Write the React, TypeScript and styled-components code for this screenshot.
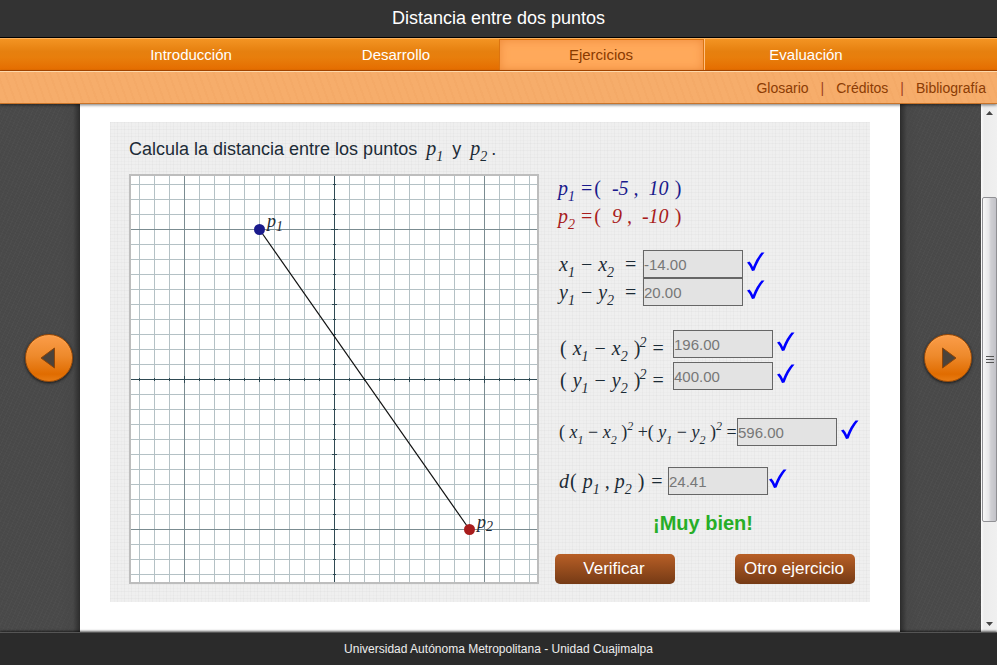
import React from "react";
import styled, { createGlobalStyle, css } from "styled-components";

const GlobalStyle = createGlobalStyle`
  *, *::before, *::after { box-sizing: border-box; }
  body {
    margin: 0;
    background: #484848;
    font-family: "Liberation Sans", Arial, sans-serif;
    color: #1c2b36;
  }
`;

const Page = styled.div`
  display: flex;
  flex-direction: column;
  min-height: 100vh;
`;

const Header = styled.header`
  display: flex;
  align-items: center;
  justify-content: center;
  height: 38px;
  padding-bottom: 2px;
  background: #333;
  border-bottom: 1px solid #000;
`;

const PageTitle = styled.h1`
  margin: 0;
  font-size: 18px;
  line-height: 24px;
  font-weight: normal;
  color: #fff;
`;

const Nav = styled.nav`
  display: flex;
  justify-content: center;
  height: 33px;
  border-top: 1px solid #fbb15c;
  border-bottom: 1px solid #b04a00;
  background: linear-gradient(#f39423, #e6800f 40%, #e87e0c 60%, #e56d00);
`;

const Tab = styled.a<{ $active?: boolean }>`
  flex: 0 1 205px;
  display: flex;
  align-items: center;
  justify-content: center;
  font-size: 15px;
  line-height: 20px;
  color: #fff;
  text-decoration: none;
  ${(p) =>
    p.$active &&
    css`
      color: #8a3a00;
      background: #ffa95b;
      border: 1px solid #dc7410;
      border-bottom: 0;
      box-shadow: inset 0 0 10px #ef8c3c, 1px 0 0 #ffc183;
    `}
`;

const LinkBar = styled.nav`
  position: relative;
  display: flex;
  align-items: center;
  justify-content: flex-end;
  gap: 12px;
  height: 33px;
  padding: 1px 11px 0;
  font-size: 14px;
  line-height: 20px;
  color: #a04020;
  background:
    repeating-linear-gradient(70deg, rgba(220, 130, 60, 0.07) 0 2px, transparent 2px 7px),
    #f6ad6b;
  border-top: 1px solid #ffd9ab;
  border-bottom: 1px solid #c8742a;
  box-shadow: 0 1px 3px rgba(0, 0, 0, 0.55);
`;

const BarLink = styled.a`
  color: #8c3c04;
  text-decoration: none;
`;

const Main = styled.main`
  flex: 1;
  display: flex;
`;

const Side = styled.div<{ $right?: boolean }>`
  flex: 1 0 ${(p) => (p.$right ? 81 : 80)}px;
  display: flex;
  align-items: center;
  justify-content: flex-end;
  padding: 0 ${(p) => (p.$right ? 9 : 7)}px 20px 0;
  background:
    linear-gradient(
      ${(p) => (p.$right ? "to right" : "to left")},
      #2c2c2c,
      rgba(70, 70, 70, 0.6) 7px,
      rgba(72, 72, 72, 0) 20px
    ),
    repeating-linear-gradient(25deg, rgba(0, 0, 0, 0.03) 0 1px, transparent 1px 3px),
    repeating-linear-gradient(115deg, rgba(255, 255, 255, 0.02) 0 1px, transparent 1px 4px),
    #4a4a4a;
`;

const RoundButton = styled.button`
  flex: none;
  display: flex;
  align-items: center;
  justify-content: center;
  width: 48px;
  height: 48px;
  padding: 0;
  border: 1px solid #9c4a05;
  border-radius: 50%;
  background: linear-gradient(#fb9d4a, #ee8a2c 45%, #e06c00 85%, #e87c14);
  box-shadow: 0 1px 3px rgba(0, 0, 0, 0.7), inset 0 1px 1px #ffa550;
`;

const Content = styled.div`
  flex: 0 1 820px;
  min-width: 0;
  padding: 18px 30px 30px;
  background: #fff;
`;

const Exercise = styled.section`
  padding: 0 15px 18px 19px;
  background:
    repeating-linear-gradient(90deg, rgba(0, 0, 0, 0.022) 0 1px, transparent 1px 4px, rgba(0, 0, 0, 0.012) 4px 5px, transparent 5px 7px),
    repeating-linear-gradient(rgba(0, 0, 0, 0.022) 0 1px, transparent 1px 4px, rgba(0, 0, 0, 0.012) 4px 5px, transparent 5px 7px),
    #efefef;
`;

const Math = styled.span<{ $small?: boolean; $color?: string }>`
  font-family: "Liberation Serif", "Times New Roman", serif;
  font-size: ${(p) => (p.$small ? 18 : 20)}px;
  line-height: 28px;
  font-style: italic;
  white-space: pre;
  color: ${(p) => p.$color || "inherit"};

  b {
    margin: 0 ${(p) => (p.$small ? 0 : 1)}px;
    font-style: normal;
    font-weight: normal;
  }
  sub,
  sup {
    font-size: ${(p) => (p.$small ? 12 : 14)}px;
    line-height: 0;
    vertical-align: -6px;
  }
  sup {
    margin-left: ${(p) => (p.$small ? 0 : -2)}px;
    vertical-align: 8px;
  }
`;

const Question = styled.h2`
  height: 52px;
  margin: 0;
  padding: 13px 0;
  font-size: 18px;
  line-height: 28px;
  font-weight: normal;

  ${Math} {
    padding: 0 4px;
    line-height: 20px;
  }
`;

const Columns = styled.div`
  display: grid;
  grid-template-columns: minmax(0, 410fr) minmax(300px, 300fr);
  gap: 16px;
`;

const Plot = styled.svg`
  display: block;
  width: 100%;
  border: 2px solid #bdbdbd;
  background: #fff;
  font-family: "Liberation Serif", "Times New Roman", serif;
  font-style: italic;
`;

const Work = styled.form`
  display: flex;
  flex-direction: column;
`;

const Coordinates = styled.p`
  display: flex;
  margin: 0;
  padding-left: 3px;
`;

const Group = styled.div<{ $top: number; $gap?: number }>`
  display: flex;
  flex-direction: column;
  gap: ${(p) => p.$gap || 0}px;
  margin-top: ${(p) => p.$top}px;
`;

const Row = styled.div`
  display: flex;
  align-items: center;
`;

const Formula = styled.label<{ $width: number; $drop?: boolean }>`
  flex: none;
  width: ${(p) => p.$width}px;
  height: 28px;
  padding: ${(p) => (p.$drop ? 4 : 0)}px 0 0 4px;
`;

const Answer = styled.input`
  flex: none;
  width: 100px;
  height: 28px;
  padding: 0;
  border: 1px solid #666;
  border-radius: 0;
  background: #e3e3e3;
  font: 15px "Liberation Sans", Arial, sans-serif;
  color: #777;
`;

const CheckMark = styled.svg<{ $gap: number }>`
  flex: none;
  width: 18px;
  height: 20px;
  margin: 0 0 5px ${(p) => p.$gap}px;
`;

const Message = styled.p`
  margin: 14px 0 17px;
  padding-right: 4px;
  font-size: 20px;
  line-height: 28px;
  font-weight: bold;
  text-align: center;
  color: #27ae27;
`;

const Actions = styled.div`
  display: flex;
  justify-content: space-between;
`;

const ActionButton = styled.button`
  width: 120px;
  height: 30px;
  padding: 0 2px 0 0;
  border: 0;
  border-radius: 5px;
  background: linear-gradient(#b85f26, #753a15);
  font: 17px "Liberation Sans", Arial, sans-serif;
  color: #fff;
`;

const Scrollbar = styled.div`
  flex: 0 0 16px;
  display: flex;
  flex-direction: column;
  background: linear-gradient(to right, #fafafa, #ececec 3px, #f0f0f0);
`;

const Arrow = styled.button`
  display: flex;
  align-items: center;
  justify-content: center;
  height: 17px;
  padding: 0 0 0 2px;
  border: 0;
  background: none;
`;

const Track = styled.div<{ $share: number }>`
  flex: ${(p) => p.$share};
`;

const Thumb = styled.div`
  flex: 325;
  display: flex;
  align-items: center;
  justify-content: center;
  margin-left: 1px;
  border: 1px solid #909094;
  border-radius: 2px;
  background: linear-gradient(to right, #f7f7f7, #e6e6e8 45%, #cfcfd3 60%, #c2c2c8);
`;

const Footer = styled.footer`
  position: relative;
  height: 33px;
  border-top: 1px solid #555;
  background: #2b2b2b;
  font-size: 12px;
  line-height: 32px;
  text-align: center;
  color: #eee;
  box-shadow: 0 -1px 2px rgba(0, 0, 0, 0.6);
`;

const UNITS = Array.from({ length: 27 }, (_, i) => i - 13);
const at = (n: number) => 203.5 + n * 15;
const tick = (n: number) => (n % 10 === 0 ? 3 : n % 5 === 0 ? 2 : 1);

function Graph() {
  return (
    <Plot viewBox="0 0 406 406" role="img" aria-label="Plano cartesiano">
      <g stroke="#b4c1c5">
        {UNITS.map((n) => (
          <path key={n} d={`M${at(n)} 0V406M0 ${at(n)}H406`} />
        ))}
      </g>
      <path stroke="#7b8c91" d={`M${at(-10)} 0V406M${at(10)} 0V406M0 ${at(-10)}H406M0 ${at(10)}H406`} />
      <g stroke="#2f4a54">
        <path d="M203.5 0V406M0 203.5H406" />
        {UNITS.map((n) => (
          <path
            key={n}
            d={`M${at(n)} ${203 - tick(n)}V${204 + tick(n)}M${203 - tick(n)} ${at(n)}H${204 + tick(n)}`}
          />
        ))}
      </g>
      <path d={`M${at(-5)} ${at(-10)}L${at(9)} ${at(10)}`} stroke="#111" strokeWidth="1.2" />
      <circle cx={at(-5)} cy={at(-10)} r="5.5" fill="#1a1a8c" />
      <circle cx={at(9)} cy={at(10)} r="5.5" fill="#a81c1c" />
      <g fill="#1c2b36" fontSize="18">
        <text x="136" y="51">p</text>
        <text x="145" y="55" fontSize="14">1</text>
        <text x="346" y="352">p</text>
        <text x="355" y="355" fontSize="14">2</text>
      </g>
    </Plot>
  );
}

function Check({ gap }: { gap: number }) {
  return (
    <CheckMark $gap={gap} viewBox="0 0 18 20" role="img" aria-label="Correcto">
      <path d="M0 10.5L2.5 9.5Q4.5 11.5 6 15Q9.5 6 14.5 .5H17.5Q11.500 7.500 7.500 18.500L5 19Q3 13.500 0 10.500Z" fill="#00f" />
    </CheckMark>
  );
}

interface ItemProps {
  id: string;
  width: number;
  value: string;
  drop?: boolean;
  small?: boolean;
  gap?: number;
  children: React.ReactNode;
}

function Item({ id, width, value, drop, small, gap = 4, children }: ItemProps) {
  return (
    <Row>
      <Formula htmlFor={id} $width={width} $drop={drop}>
        <Math $small={small}>{children}</Math>
      </Formula>
      <Answer id={id} defaultValue={value} disabled />
      <Check gap={gap} />
    </Row>
  );
}

export default function App() {
  return (
    <Page>
      <GlobalStyle />
      <Header>
        <PageTitle>Distancia entre dos puntos</PageTitle>
      </Header>
      <Nav>
        <Tab href="#introduccion">Introducción</Tab>
        <Tab href="#desarrollo">Desarrollo</Tab>
        <Tab href="#ejercicios" $active aria-current="page">Ejercicios</Tab>
        <Tab href="#evaluacion">Evaluación</Tab>
      </Nav>
      <LinkBar>
        <BarLink href="#glosario">Glosario</BarLink>
        <span>|</span>
        <BarLink href="#creditos">Créditos</BarLink>
        <span>|</span>
        <BarLink href="#bibliografia">Bibliografía</BarLink>
      </LinkBar>
      <Main>
        <Side>
          <RoundButton aria-label="Anterior">
            <svg width="18" height="24" viewBox="0 0 18 24">
              <path d="M14.500 2V22L1 12Z" fill="#4b433b" stroke="#8e4508" />
            </svg>
          </RoundButton>
        </Side>
        <Content>
          <Exercise>
            <Question>
              {"Calcula la distancia entre los puntos "}
              <Math>p<sub>1</sub></Math>
              {" y "}
              <Math>p<sub>2</sub></Math>
              {"."}
            </Question>
            <Columns>
              <Graph />
              <Work>
                <Coordinates>
                  <Math $color="#1a1a8c">p<sub>1</sub> <b>=</b><b>(</b>{"  -5 ,  10 "}<b>)</b></Math>
                </Coordinates>
                <Coordinates>
                  <Math $color="#a81c1c">p<sub>2</sub> <b>=</b><b>(</b>{"  9 ,  -10 "}<b>)</b></Math>
                </Coordinates>
                <Group $top={20}>
                  <Item id="dx" width={88} value="-14.00">
                    x<sub>1</sub> <b>−</b> x<sub>2</sub>{"  "}<b>=</b>
                  </Item>
                  <Item id="dy" width={88} value="20.00">
                    y<sub>1</sub> <b>−</b> y<sub>2</sub>{"  "}<b>=</b>
                  </Item>
                </Group>
                <Group $top={24} $gap={4}>
                  <Item id="dx2" width={118} value="196.00" drop>
                    <b>(</b> x<sub>1</sub> <b>−</b> x<sub>2</sub> <b>)</b><sup>2</sup> <b>=</b>
                  </Item>
                  <Item id="dy2" width={118} value="400.00" drop>
                    <b>(</b> y<sub>1</sub> <b>−</b> y<sub>2</sub> <b>)</b><sup>2</sup> <b>=</b>
                  </Item>
                </Group>
                <Group $top={28}>
                  <Item id="sum" width={182} value="596.00" small>
                    <b>(</b> x<sub>1</sub> <b>−</b> x<sub>2</sub> <b>)</b><sup>2</sup> <b>+(</b> y<sub>1</sub> <b>−</b> y<sub>2</sub> <b>)</b><sup>2</sup> <b>=</b>
                  </Item>
                </Group>
                <Group $top={21}>
                  <Item id="dist" width={113} value="24.41" gap={1}>
                    d<b>(</b> p<sub>1</sub> , p<sub>2</sub> <b>)</b> <b>=</b>
                  </Item>
                </Group>
                <Message>¡Muy bien!</Message>
                <Actions>
                  <ActionButton type="button">Verificar</ActionButton>
                  <ActionButton type="button">Otro ejercicio</ActionButton>
                </Actions>
              </Work>
            </Columns>
          </Exercise>
        </Content>
        <Side $right>
          <RoundButton aria-label="Siguiente">
            <svg width="18" height="24" viewBox="0 0 18 24">
              <path d="M3.500 2V22L17 12Z" fill="#4b433b" stroke="#8e4508" />
            </svg>
          </RoundButton>
        </Side>
        <Scrollbar>
          <Arrow aria-label="Subir">
            <svg width="8" height="4" viewBox="0 0 8 4"><path d="M0 4L3.500 0L7 4Z" fill="#444" /></svg>
          </Arrow>
          <Track $share={76} />
          <Thumb>
            <svg width="8" height="8" viewBox="0 0 8 8"><path d="M0 .5H8M0 3.500H8M0 6.500H8" stroke="#555" /></svg>
          </Thumb>
          <Track $share={93} />
          <Arrow aria-label="Bajar">
            <svg width="8" height="4" viewBox="0 0 8 4"><path d="M0 0H7L3.500 4Z" fill="#444" /></svg>
          </Arrow>
        </Scrollbar>
      </Main>
      <Footer>Universidad Autónoma Metropolitana - Unidad Cuajimalpa</Footer>
    </Page>
  );
}
